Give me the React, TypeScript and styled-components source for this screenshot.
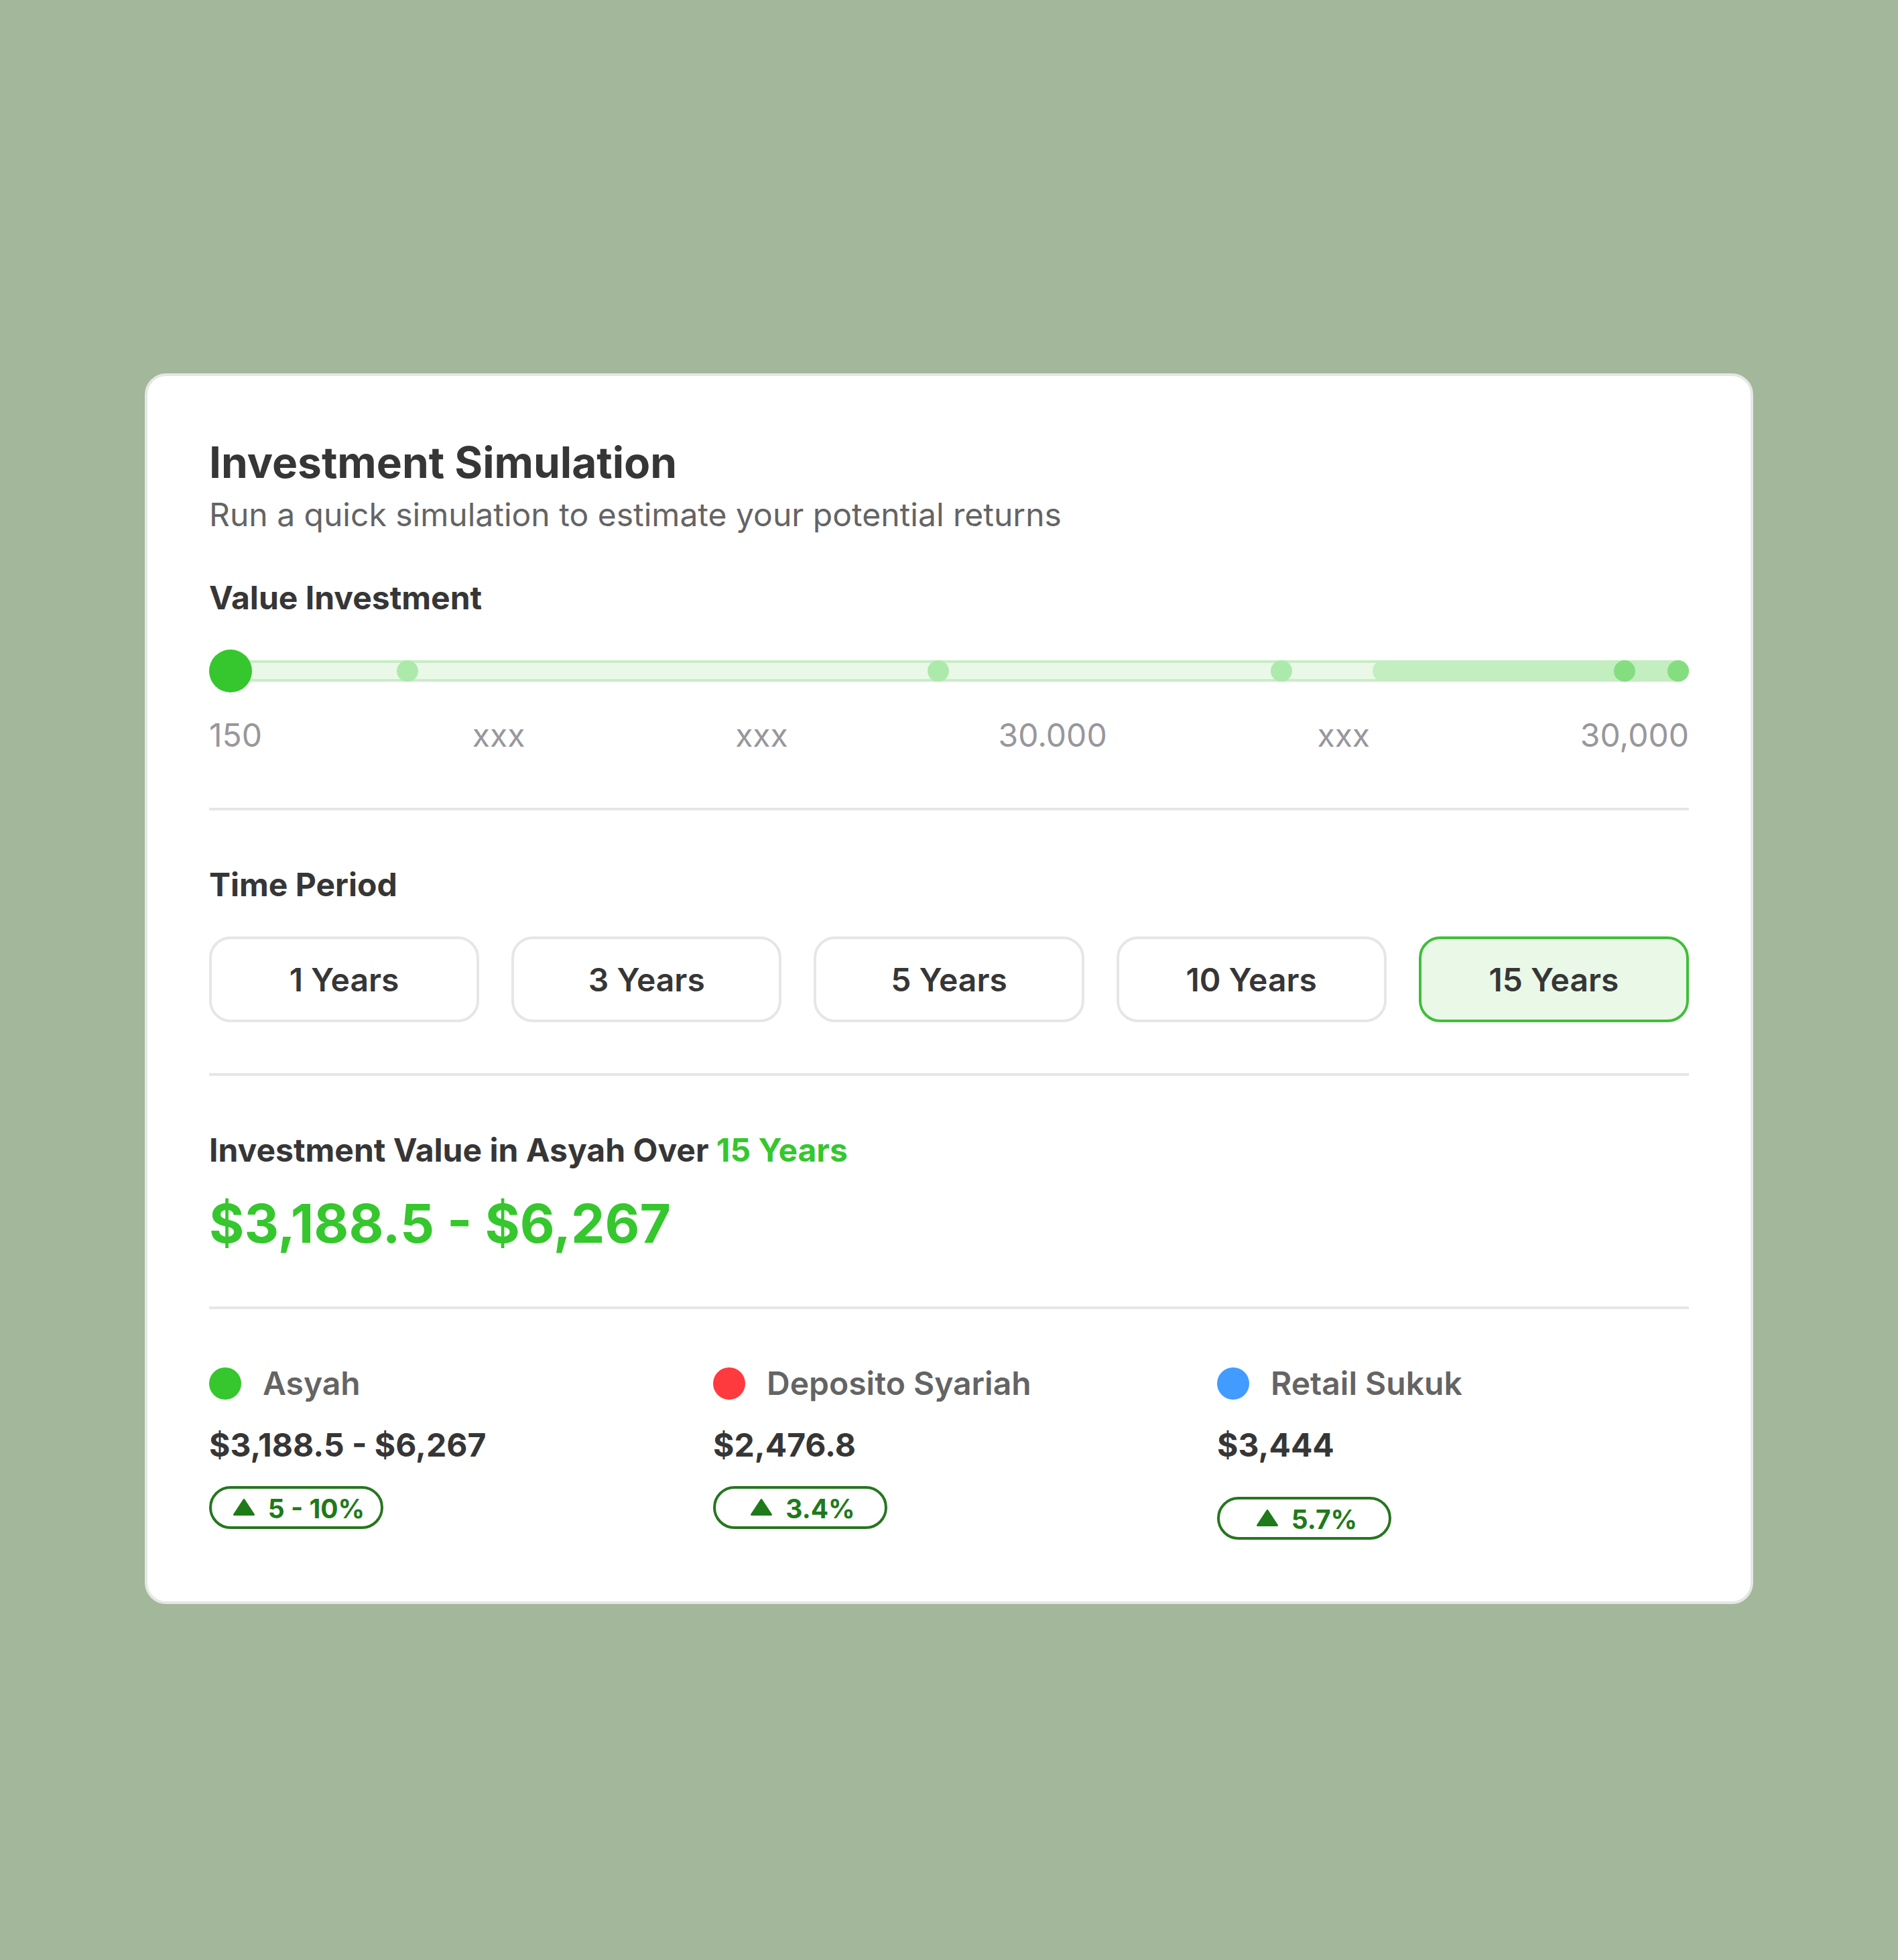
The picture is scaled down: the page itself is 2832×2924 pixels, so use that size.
import React, { useState } from "react";
import styled, { createGlobalStyle } from "styled-components";

const GlobalStyle = createGlobalStyle`
  *, *::before, *::after { box-sizing: border-box; }
  body {
    margin: 0;
    background: #a3b79b;
    font-family: Inter, "Liberation Sans", sans-serif;
    color: #363636;
  }
`;

const Page = styled.div`
  min-height: 100vh;
  padding: 557px 216px 531px;
`;

const Card = styled.main`
  padding: 92px;
  border: 4px solid #e4e7e3;
  border-radius: 32px;
  background: #ffffff;
`;

const Title = styled.h1`
  margin: 0 0 10px;
  font-size: 64px;
  line-height: 74px;
  font-weight: 700;
`;

const Subtitle = styled.p`
  margin: 0 0 62px;
  font-size: 48px;
  line-height: 62px;
  color: #646464;
`;

const Section = styled.section<{ $gap: number }>`
  display: flex;
  flex-direction: column;
  gap: ${(p) => p.$gap}px;
  padding-bottom: 76px;
  margin-bottom: 80px;
  border-bottom: 4px solid #e6e6e6;
`;

const Heading = styled.h2`
  margin: 0;
  font-size: 48px;
  line-height: 62px;
  font-weight: 700;
`;

const SliderGroup = styled.div`
  display: flex;
  flex-direction: column;
  gap: 32px;
`;

const Slider = styled.div`
  position: relative;
  display: flex;
  align-items: center;
  height: 64px;
`;

const Track = styled.div`
  position: relative;
  flex: 1;
  height: 32px;
  border-radius: 16px;
  background: #eaf8e8;
  box-shadow: inset 0 0 0 4px #c8edc5;
`;

const Range = styled.div`
  position: absolute;
  top: 0;
  right: 0;
  height: 32px;
  border-radius: 16px;
  background: #c3eec0;
`;

const Stop = styled.span<{ $strong: boolean }>`
  position: absolute;
  top: 0;
  width: 32px;
  height: 32px;
  border-radius: 50%;
  background: ${(p) => (p.$strong ? "#84de80" : "#aceaab")};
`;

const SliderInput = styled.input`
  position: absolute;
  inset: 0;
  width: 100%;
  height: 64px;
  margin: 0;
  appearance: none;
  background: transparent;
  cursor: pointer;

  &::-webkit-slider-runnable-track {
    height: 64px;
    background: transparent;
  }
  &::-webkit-slider-thumb {
    appearance: none;
    width: 64px;
    height: 64px;
    border-radius: 50%;
    background: #35c72d;
  }
`;

const Scale = styled.div`
  display: flex;
  justify-content: space-between;
  font-size: 48px;
  line-height: 64px;
  color: #98979d;
`;

const Periods = styled.div`
  display: grid;
  grid-template-columns: repeat(5, 1fr);
  gap: 48px;
`;

const PeriodButton = styled.button<{ $active: boolean }>`
  height: 128px;
  padding: 2px 0 0;
  border: 4px solid ${(p) => (p.$active ? "#3fbf38" : "#e6e6e6")};
  border-radius: 32px;
  background: ${(p) => (p.$active ? "#eaf8e8" : "#ffffff")};
  color: inherit;
  font-family: inherit;
  font-size: 48px;
  line-height: 62px;
  font-weight: 600;
  cursor: pointer;
`;

const Accent = styled.span`
  color: #35c72d;
`;

const Total = styled.p`
  margin: 0;
  font-size: 80px;
  line-height: 96px;
  font-weight: 700;
  color: #35c72d;
`;

const Products = styled.div`
  display: grid;
  grid-template-columns: repeat(3, 1fr);
  gap: 48px;
`;

const Product = styled.article<{ $gap: number }>`
  display: flex;
  flex-direction: column;
  align-items: flex-start;
  gap: ${(p) => p.$gap}px;
`;

const Summary = styled.div`
  display: flex;
  flex-direction: column;
  gap: 30px;
`;

const Name = styled.h3`
  display: flex;
  align-items: center;
  gap: 32px;
  margin: 0;
  font-size: 48px;
  line-height: 62px;
  font-weight: 600;
  color: #646464;
`;

const Dot = styled.span<{ $color: string }>`
  width: 48px;
  height: 48px;
  border-radius: 50%;
  background: ${(p) => p.$color};
`;

const Amount = styled.p`
  margin: 0;
  font-size: 48px;
  line-height: 62px;
  font-weight: 700;
`;

const Badge = styled.span`
  display: flex;
  align-items: center;
  justify-content: center;
  gap: 16px;
  width: 260px;
  height: 64px;
  padding: 4px 0 0 4px;
  border: 4px solid #25761f;
  border-radius: 32px;
  color: #1f7a1a;
  font-size: 39px;
  line-height: 48px;
  font-weight: 700;
  white-space: nowrap;
`;

const Triangle = styled.svg`
  flex: none;
  width: 40px;
  height: 40px;
`;

const stops = [
  { at: 0.1287, strong: false },
  { at: 0.4926, strong: false },
  { at: 0.7279, strong: false },
  { at: 0.9632, strong: true },
  { at: 1, strong: true },
];

const scaleLabels = ["150", "xxx", "xxx", "30.000", "xxx", "30,000"];

const periods = [1, 3, 5, 10, 15];

const products = [
  { name: "Asyah", color: "#35c72d", amount: "$3,188.5 - $6,267", rate: "5 - 10%", gap: 30 },
  { name: "Deposito Syariah", color: "#ff3a3f", amount: "$2,476.8", rate: "3.4%", gap: 30 },
  { name: "Retail Sukuk", color: "#429bff", amount: "$3,444", rate: "5.7%", gap: 46 },
];

export default function App() {
  const [value, setValue] = useState(150);
  const [period, setPeriod] = useState(15);

  return (
    <>
      <GlobalStyle />
      <Page>
        <Card>
          <Title>Investment Simulation</Title>
          <Subtitle>Run a quick simulation to estimate your potential returns</Subtitle>

          <Section $gap={46}>
            <Heading as="label" htmlFor="value-investment">
              Value Investment
            </Heading>
            <SliderGroup>
              <Slider>
                <Track>
                  <Range style={{ width: `${(472 / 2208) * 100}%` }} />
                  {stops.map((stop) => (
                    <Stop
                      key={stop.at}
                      $strong={stop.strong}
                      style={{ left: `calc((100% - 32px) * ${stop.at})` }}
                    />
                  ))}
                </Track>
                <SliderInput
                  id="value-investment"
                  type="range"
                  min={150}
                  max={30000}
                  value={value}
                  onChange={(e) => setValue(Number(e.target.value))}
                />
              </Slider>
              <Scale>
                {scaleLabels.map((label, i) => (
                  <span key={i}>{label}</span>
                ))}
              </Scale>
            </SliderGroup>
          </Section>

          <Section $gap={46}>
            <Heading>Time Period</Heading>
            <Periods>
              {periods.map((years) => (
                <PeriodButton
                  key={years}
                  type="button"
                  $active={years === period}
                  aria-pressed={years === period}
                  onClick={() => setPeriod(years)}
                >
                  {years} Years
                </PeriodButton>
              ))}
            </Periods>
          </Section>

          <Section $gap={30}>
            <Heading>
              Investment Value in Asyah Over <Accent>{period} Years</Accent>
            </Heading>
            <Total>$3,188.5 - $6,267</Total>
          </Section>

          <Products>
            {products.map((product) => (
              <Product key={product.name} $gap={product.gap}>
                <Summary>
                  <Name>
                    <Dot $color={product.color} />
                    {product.name}
                  </Name>
                  <Amount>{product.amount}</Amount>
                </Summary>
                <Badge>
                  <Triangle viewBox="0 0 40 40" aria-hidden="true">
                    <path
                      d="M20 6.5 L34.5 28.5 H5.5 Z"
                      fill="currentColor"
                      stroke="currentColor"
                      strokeWidth="3"
                      strokeLinejoin="round"
                    />
                  </Triangle>
                  {product.rate}
                </Badge>
              </Product>
            ))}
          </Products>
        </Card>
      </Page>
    </>
  );
}
